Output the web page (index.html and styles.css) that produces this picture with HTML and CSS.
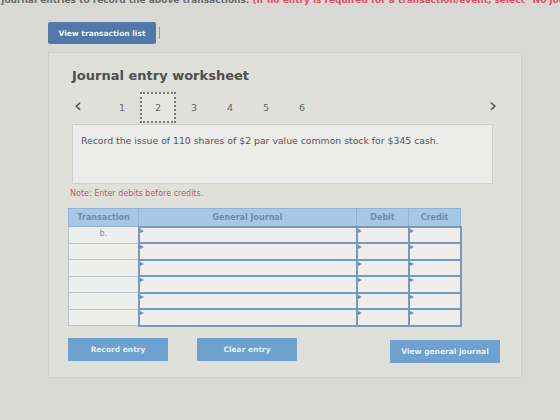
FILE: index.html
```html
<!DOCTYPE html>
<html lang="en">

<head>
    <meta charset="UTF-8">
    <title>Journal entry worksheet</title>
    <link rel="stylesheet" href="styles.css">
</head>

<body>
    <p class="intro">Prepare journal entries to record the above transactions. <span class="warn">(If no entry is required for a transaction/event, select "No journal entry required")</span></p>

    <div class="toolbar">
        <button class="btn-dark">View transaction list</button>
        <span class="sep"></span>
    </div>

    <div class="worksheet">
        <h3 class="title">Journal entry worksheet</h3>

        <div class="pager">
            <span class="arrow">&lsaquo;</span>
            <div class="pages">
                <span class="page">1</span>
                <span class="page current">2</span>
                <span class="page">3</span>
                <span class="page">4</span>
                <span class="page">5</span>
                <span class="page">6</span>
            </div>
            <span class="arrow next">&rsaquo;</span>
        </div>

        <div class="question">Record the issue of 110 shares of $2 par value common stock for $345 cash.</div>

        <p class="note">Note: Enter debits before credits.</p>

        <table class="journal">
            <thead>
                <tr>
                    <th class="c-trans">Transaction</th>
                    <th class="c-acct">General Journal</th>
                    <th class="c-num">Debit</th>
                    <th class="c-num">Credit</th>
                </tr>
            </thead>
            <tbody>
                <tr>
                    <td class="trans">b.</td>
                    <td class="cell"><div class="input"></div></td>
                    <td class="cell"><div class="input"></div></td>
                    <td class="cell"><div class="input"></div></td>
                </tr>
                <tr>
                    <td class="trans"></td>
                    <td class="cell"><div class="input"></div></td>
                    <td class="cell"><div class="input"></div></td>
                    <td class="cell"><div class="input"></div></td>
                </tr>
                <tr>
                    <td class="trans"></td>
                    <td class="cell"><div class="input"></div></td>
                    <td class="cell"><div class="input"></div></td>
                    <td class="cell"><div class="input"></div></td>
                </tr>
                <tr>
                    <td class="trans"></td>
                    <td class="cell"><div class="input"></div></td>
                    <td class="cell"><div class="input"></div></td>
                    <td class="cell"><div class="input"></div></td>
                </tr>
                <tr>
                    <td class="trans"></td>
                    <td class="cell"><div class="input"></div></td>
                    <td class="cell"><div class="input"></div></td>
                    <td class="cell"><div class="input"></div></td>
                </tr>
                <tr>
                    <td class="trans"></td>
                    <td class="cell"><div class="input"></div></td>
                    <td class="cell"><div class="input"></div></td>
                    <td class="cell"><div class="input"></div></td>
                </tr>
            </tbody>
        </table>

        <div class="actions">
            <button class="btn">Record entry</button>
            <button class="btn">Clear entry</button>
            <button class="btn wide">View general journal</button>
        </div>
    </div>
</body>

</html>
```

FILE: styles.css
```css
* {
    margin: 0px;
    padding: 0px;
    box-sizing: border-box;
}

body {
    background-color: #d8d8d5;
    font-family: "DejaVu Sans", Verdana, sans-serif;
    color: #4a4a4a;
    width: 560px;
    height: 420px;
    overflow: hidden;
}

/* instructions line above the worksheet, scrolled partly out of view */
.intro {
    margin-top: -6px;
    margin-left: -42px;
    font-size: 9px;
    font-weight: bold;
    line-height: 12px;
    white-space: nowrap;
    color: #6a6a6a;
}

.warn {
    color: #e0506a;
}

.toolbar {
    display: flex;
    align-items: center;
    gap: 3px;
    margin-top: 16px;
    padding-left: 48px;
}

.btn-dark {
    width: 108px;
    height: 22px;
    border: none;
    border-radius: 2px;
    background-color: #5079a8;
    color: #eef2f6;
    font-family: inherit;
    font-size: 7.5px;
    font-weight: bold;
}

.sep {
    width: 1px;
    height: 12px;
    background-color: #999;
}

.worksheet {
    margin-top: 8px;
    margin-left: 48px;
    width: 474px;
    height: 326px;
    padding: 15px 28px 0 21px;
    background-color: #e0e0da;
    border: 1px solid #d0d0ca;
}

.title {
    padding-left: 2px;
    font-size: 13px;
    font-weight: bold;
    color: #4e4e4e;
}

.pager {
    display: flex;
    align-items: center;
    height: 32px;
    margin-top: 8px;
    padding-left: 4px;
}

.arrow {
    font-size: 20px;
    color: #555;
    line-height: 1;
    margin-top: -4px;
}

.arrow.next {
    margin-left: auto;
    margin-right: -4px;
}

.pages {
    display: flex;
    margin-left: 22px;
}

.page {
    width: 36px;
    height: 31px;
    display: flex;
    align-items: center;
    justify-content: center;
    font-size: 9.5px;
    color: #666;
}

.page.current {
    border: 2px dotted #777;
    background-color: #e6e6e2;
}

.question {
    height: 60px;
    margin-top: 1px;
    margin-left: 2px;
    padding: 10px 8px;
    background-color: #ececea;
    border: 1px solid #cfcfcb;
    font-size: 9.3px;
    color: #555;
}

.note {
    margin-top: 5px;
    font-size: 8px;
    color: #c25a64;
}

.journal {
    margin-top: 10px;
    margin-left: -2px;
    width: 393px;
    border-collapse: collapse;
    table-layout: fixed;
}

.journal th {
    height: 18px;
    background-color: #a5c8e6;
    color: #718ca8;
    font-size: 8px;
    font-weight: bold;
    border: 1px solid #94b4d2;
}

.c-trans {
    width: 70px;
}

.c-acct {
    width: 218px;
}

.c-num {
    width: 52px;
}

.journal td {
    height: 16.5px;
    border: 1px solid #7b98b8;
    background-color: #eeeeec;
}

.journal td.trans {
    border-color: #b5c2cf;
    text-align: center;
    vertical-align: top;
    font-size: 8px;
    color: #8a8a8a;
    padding-top: 2px;
}

.journal td.cell {
    padding: 0;
    border-width: 2px;
}

.input {
    position: relative;
    height: 100%;
}

/* small marker in the corner of each entry field */
.input::before {
    content: "";
    position: absolute;
    left: 0;
    top: 1px;
    border-left: 4px solid #6b8fb8;
    border-top: 2px solid transparent;
    border-bottom: 2px solid transparent;
}

.actions {
    display: flex;
    margin-top: 11px;
    margin-left: -2px;
}

.btn {
    width: 100px;
    height: 23px;
    border: none;
    border-radius: 1px;
    background-color: #6ca1d0;
    color: #e8f0f8;
    font-family: inherit;
    font-size: 7.5px;
    font-weight: bold;
}

.btn + .btn {
    margin-left: 29px;
}

.btn.wide {
    width: 110px;
    margin-left: auto;
    margin-top: 2px;
    margin-right: -7px;
}
```
